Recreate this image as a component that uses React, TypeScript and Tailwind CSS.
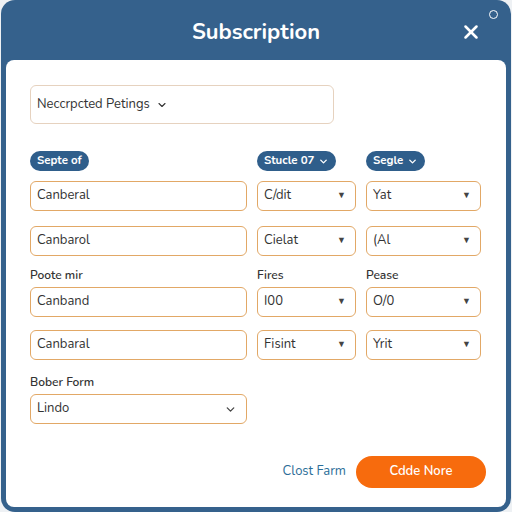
import { ChevronDown, X } from "lucide-react";

const font = { fontFamily: '"Nunito", "Lato", "Open Sans", sans-serif' };

function Field({ value, caret }: { value: string; caret?: "fill" | "line" }) {
  return (
    <div className="flex h-[30px] items-center justify-between rounded-[6px] border border-[#e2a866] bg-white pl-[6px] pr-[9px] text-[13px] text-[#333]">
      <span>{value}</span>
      {caret === "fill" && <span className="text-[9px] text-[#444]">▼</span>}
      {caret === "line" && <ChevronDown size={13} strokeWidth={2.4} className="text-[#444]" />}
    </div>
  );
}

function Pill({ text, chevron }: { text: string; chevron?: boolean }) {
  return (
    <div className="flex h-[20px] w-fit items-center gap-[4px] rounded-full bg-[#2f5e8b] px-[7px] text-[11.5px] font-bold text-white">
      <span>{text}</span>
      {chevron && <ChevronDown size={11} strokeWidth={3} />}
    </div>
  );
}

export default function App() {
  return (
    <div className="h-[512px] w-[512px] bg-[#eef1f4] px-[1px]" style={font}>
      <div className="flex h-full flex-col rounded-[14px] bg-[#35618c] px-[5px] pb-[5px]">
        {/* Header */}
        <div className="relative flex h-[60px] items-center justify-center pt-[5px]">
          <h1 className="text-[22px] font-bold text-white">Subscription</h1>
          <X size={22} strokeWidth={2.8} className="absolute right-[24px] top-[21px] text-white" />
          <div className="absolute right-[8px] top-[10px] h-[9px] w-[9px] rounded-full border-[1.5px] border-white" />
        </div>

        {/* Body */}
        <div className="flex flex-1 flex-col rounded-[8px] bg-white px-[24px] pt-[25px]">
          <div className="flex h-[39px] w-[304px] items-center gap-[6px] rounded-[6px] border border-[#e6d2bf] px-[6px] text-[13px] text-[#333]">
            <span>Neccrpcted Petings</span>
            <ChevronDown size={12} strokeWidth={2.2} />
          </div>

          <div className="mt-[27px] grid grid-cols-[217px_99px_115px] gap-x-[10px]">
            <Pill text="Septe of" />
            <Pill text="Stucle 07" chevron />
            <Pill text="Segle" chevron />

            <div className="mt-[10px]"><Field value="Canberal" /></div>
            <div className="mt-[10px]"><Field value="C/dit" caret="fill" /></div>
            <div className="mt-[10px]"><Field value="Yat" caret="fill" /></div>

            <div className="mt-[15px]"><Field value="Canbarol" /></div>
            <div className="mt-[15px]"><Field value="Cielat" caret="fill" /></div>
            <div className="mt-[15px]"><Field value="(Al" caret="fill" /></div>

            <div className="mt-[10px] h-[16px] text-[12px] font-semibold text-[#333]">Poote mir</div>
            <div className="mt-[10px] h-[16px] text-[12px] font-semibold text-[#333]">Fires</div>
            <div className="mt-[10px] h-[16px] text-[12px] font-semibold text-[#333]">Pease</div>

            <div className="mt-[5px]"><Field value="Canband" /></div>
            <div className="mt-[5px]"><Field value="I00" caret="fill" /></div>
            <div className="mt-[5px]"><Field value="O/0" caret="fill" /></div>

            <div className="mt-[13px]"><Field value="Canbaral" /></div>
            <div className="mt-[13px]"><Field value="Fisint" caret="fill" /></div>
            <div className="mt-[13px]"><Field value="Yrit" caret="fill" /></div>

            <div className="col-span-3 mt-[13px] h-[16px] text-[12px] font-semibold text-[#333]">Bober Form</div>
            <div className="mt-[5px]"><Field value="Lindo" caret="line" /></div>
          </div>

          <div className="mr-[-4px] mt-[32px] flex items-center justify-end gap-[10px]">
            <button className="text-[13px] text-[#2b6e98]">Clost Farm</button>
            <button className="flex h-[32px] w-[130px] items-center justify-center rounded-full bg-[#f76b0d] text-[13px] font-semibold text-white">
              Cdde Nore
            </button>
          </div>
        </div>
      </div>
    </div>
  );
}
